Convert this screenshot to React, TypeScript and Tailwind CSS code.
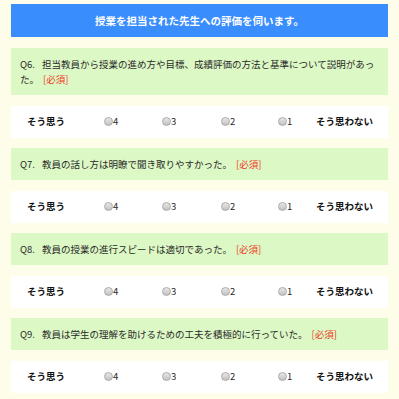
import type { ReactNode } from "react";

const questions: { no: string; text: ReactNode }[] = [
  {
    no: "Q6",
    text: (
      <>
        担当教員から授業の進め方や目標、成績評価の方法と基準について説明があっ
        <br />
        た。
      </>
    ),
  },
  { no: "Q7", text: "教員の話し方は明瞭で聞き取りやすかった。" },
  { no: "Q8", text: "教員の授業の進行スピードは適切であった。" },
  { no: "Q9", text: "教員は学生の理解を助けるための工夫を積極的に行っていた。" },
];

const Radio = ({ label }: { label: string }) => (
  <div className="flex items-center">
    <span className="inline-block w-[9px] h-[9px] rounded-full border border-[#aaaaaa] bg-gradient-to-b from-[#e8e8e8] to-[#c2c2c2]"></span>
    <span className="text-[9.5px] leading-none text-[#2a2a2a]">{label}</span>
  </div>
);

export default function App() {
  return (
    <div
      className="w-[399px] h-[399px] overflow-hidden bg-[#fdfde9] px-[11px] pt-[4px] text-[#2a2a2a]"
      style={{ fontFamily: '"Noto Sans CJK JP", "Noto Sans", sans-serif' }}
    >
      {/* header */}
      <div className="h-[33px] bg-[#3a8dfd] flex items-center justify-center text-white font-bold text-[10.5px]">
        授業を担当された先生への評価を伺います。
      </div>

      <div className="mt-[11px] flex flex-col gap-[10.5px]">
        {questions.map((q) => (
          <div key={q.no} className="flex flex-col gap-[10.5px]">
            <div className="bg-[#dcf8c4] min-h-[32px] pl-[9px] pr-[6px] py-[8.5px] text-[9.5px] leading-[15px]">
              <span className="inline-block w-[22px]">{q.no}.</span>
              {q.text}
              <span className="ml-[4px] text-[#ee3a2a]">[必須]</span>
            </div>

            {/* answer row */}
            <div className="bg-white h-[32px] pl-[16px] grid grid-cols-[77px_58px_59px_57px_38px_auto] items-center text-[9.5px]">
              <span className="font-bold text-[#111]">そう思う</span>
              <Radio label="4" />
              <Radio label="3" />
              <Radio label="2" />
              <Radio label="1" />
              <span className="font-bold text-[#111]">そう思わない</span>
            </div>
          </div>
        ))}
      </div>
    </div>
  );
}
